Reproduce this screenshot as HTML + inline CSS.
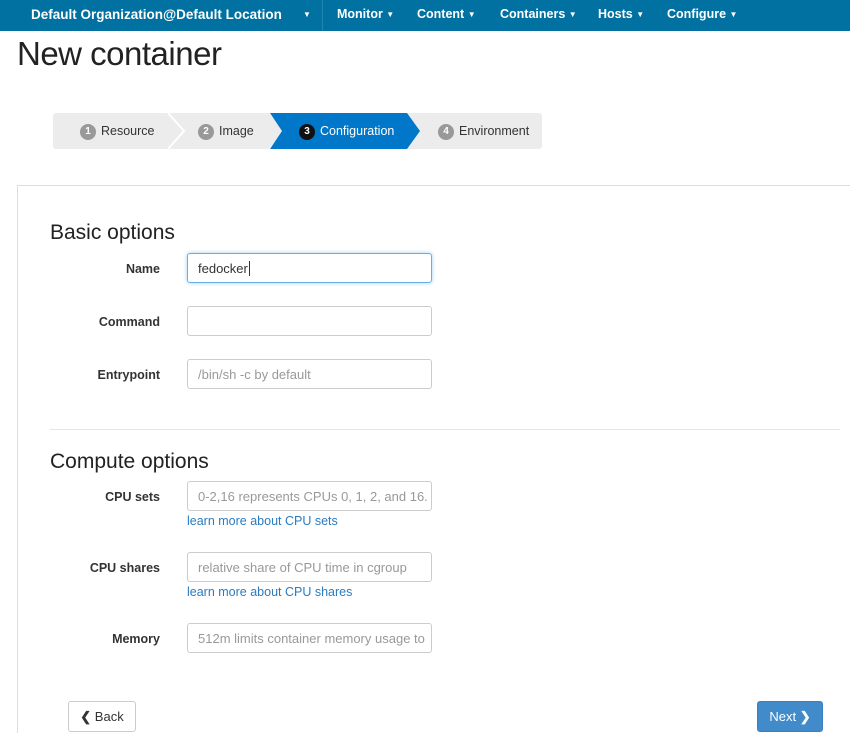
<!DOCTYPE html>
<html><head><style>
*{box-sizing:border-box}
html,body{margin:0;width:850px;height:733px;overflow:hidden}
body{background:#fff;font-family:"Liberation Sans",sans-serif;color:#333;position:relative}
.nav{position:absolute;left:0;top:0;width:850px;height:31px;background:#0071a0;color:#fff;font-weight:bold;font-size:12.5px}
.nav span{position:absolute;top:7px}
.nav i{font-style:normal;font-size:8px;vertical-align:1px}
.sep{position:absolute;left:322px;top:0;width:1px;height:31px;background:#1e86b2}
h1{position:absolute;left:17px;top:35px;margin:0;font-size:33px;font-weight:normal;color:#222;letter-spacing:-0.5px}
.steps{position:absolute;left:53px;top:113px;height:36px;width:489px;background:#ececec;border-radius:3px}
.st{position:absolute;top:0;height:36px;line-height:36px;font-size:12.5px;color:#333}
.num{display:inline-block;width:16px;height:16px;border-radius:8px;background:#999;color:#fff;font-size:10px;font-weight:bold;text-align:center;line-height:16px;margin-right:5px;vertical-align:1px}
.panel{position:absolute;left:17px;top:185px;width:840px;height:560px;border:1px solid #ddd}
h2{position:absolute;margin:0;font-size:21px;font-weight:normal;color:#222;left:50px}
.lbl{position:absolute;right:690px;font-size:12.5px;font-weight:bold;color:#333}
.inp{position:absolute;left:187px;width:245px;height:30px;border:1px solid #ccc;border-radius:3px;font-size:13px;color:#999;padding:7px 10px;white-space:nowrap;overflow:hidden}
.lnk{position:absolute;left:187px;font-size:12.5px;color:#2a7bc0}
.btn{position:absolute;top:701px;height:31px;border-radius:3px;font-size:13px;line-height:29px;text-align:center}
</style></head><body>
<div class="nav">
<span style="left:31px;font-size:13.5px">Default Organization@Default Location</span>
<span style="left:303px"><i>▼</i></span>
<div class="sep"></div>
<span style="left:337px">Monitor <i>▼</i></span>
<span style="left:417px">Content <i>▼</i></span>
<span style="left:500px">Containers <i>▼</i></span>
<span style="left:598px">Hosts <i>▼</i></span>
<span style="left:667px">Configure <i>▼</i></span>
</div>
<h1>New container</h1>
<div class="steps">
<div class="st" style="left:27px"><span class="num">1</span>Resource</div>
<svg style="position:absolute;left:113px;top:0" width="20" height="36"><polyline points="2,0 18,18 2,36" fill="none" stroke="#fff" stroke-width="2"/></svg>
<div class="st" style="left:145px"><span class="num">2</span>Image</div>
<svg style="position:absolute;left:215px;top:0" width="20" height="36"><polyline points="2,0 18,18 2,36" fill="none" stroke="#fff" stroke-width="2"/></svg>
<svg style="position:absolute;left:217px;top:0" width="152" height="36"><polygon points="0,0 137,0 150,18 137,36 0,36 12,18" fill="#0077c8"/></svg>
<div class="st" style="left:246px;color:#fff"><span class="num" style="background:#111">3</span>Configuration</div>
<div class="st" style="left:385px"><span class="num">4</span>Environment</div>
</div>
<div class="panel"></div>
<h2 style="top:221px">Basic options</h2>
<div class="lbl" style="top:262px">Name</div>
<div class="inp" style="top:253px;border-color:#66afe9;box-shadow:0 0 4px rgba(102,175,233,.6);color:#333">fedocker<span style="border-left:1px solid #333;margin-left:1px"></span></div>
<div class="lbl" style="top:315px">Command</div>
<div class="inp" style="top:306px"></div>
<div class="lbl" style="top:368px">Entrypoint</div>
<div class="inp" style="top:359px">/bin/sh -c by default</div>
<div style="position:absolute;left:50px;top:429px;width:790px;height:1px;background:#e5e5e5"></div>
<h2 style="top:450px">Compute options</h2>
<div class="lbl" style="top:490px">CPU sets</div>
<div class="inp" style="top:481px">0-2,16 represents CPUs 0, 1, 2, and 16.</div>
<div class="lnk" style="top:514px">learn more about CPU sets</div>
<div class="lbl" style="top:561px">CPU shares</div>
<div class="inp" style="top:552px">relative share of CPU time in cgroup</div>
<div class="lnk" style="top:585px">learn more about CPU shares</div>
<div class="lbl" style="top:632px">Memory</div>
<div class="inp" style="top:623px">512m limits container memory usage to</div>
<div class="btn" style="left:68px;width:68px;border:1px solid #ccc;color:#333;background:#fff"><b>❮</b> Back</div>
<div class="btn" style="left:757px;width:66px;background:#428bca;color:#fff;border:1px solid #3a7fc0">Next <b>❯</b></div>
</body></html>
